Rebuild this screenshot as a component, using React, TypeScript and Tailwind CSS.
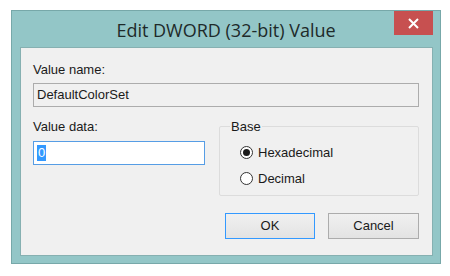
import React from "react";

const sans = { fontFamily: '"Liberation Sans", Arial, sans-serif' };

function Radio({ checked, label }: { checked?: boolean; label: string }) {
  return (
    <div className="flex items-center h-[26px]">
      <span className="w-[13px] h-[13px] rounded-full border border-[#333] bg-white flex items-center justify-center">
        {checked && <span className="w-[7px] h-[7px] rounded-full bg-[#1a1a1a]" />}
      </span>
      <span className="ml-[5px] text-[13px] leading-[15px] text-[#1a1a1a]">{label}</span>
    </div>
  );
}

export default function App() {
  return (
    <div className="w-[450px] h-[276px] bg-white pt-[10px] pl-[11px]" style={sans}>
      <div className="w-[430px] h-[254px] border border-[#77a8a9] bg-[#93c6c7] flex flex-col">
        {/* Title bar */}
        <div className="relative h-[36px] flex items-center justify-center shrink-0">
          <span
            className="text-[18px] leading-[24px] text-[#1e2a2a] mt-[1px]"
            style={{ fontFamily: '"Open Sans", "Noto Sans", sans-serif' }}
          >
            Edit DWORD (32-bit) Value
          </span>
          <div className="absolute top-0 right-[7px] w-[39px] h-[24px] bg-[#c75050] flex items-center justify-center">
            <svg width="11" height="11" viewBox="0 0 11 11">
              <path d="M1 1 L10 10 M10 1 L1 10" stroke="#fff" strokeWidth="2" />
            </svg>
          </div>
        </div>

        {/* Client area */}
        <div className="flex-1 mx-[8px] mb-[7px] mr-[7px] bg-[#f0f0f0] border border-[#86b0b1] pl-[12px] pr-[13px] pt-[14px] text-[#1a1a1a]">
          <div className="text-[13px] leading-[15px]">Value name:</div>
          <div className="mt-[6px] h-[24px] border border-[#acacac] bg-[#f0f0f0] flex items-center px-[3px] text-[13px]">
            DefaultColorSet
          </div>

          <div className="mt-[12px] flex gap-[14px]">
            <div className="w-[172px]">
              <div className="text-[13px] leading-[15px]">Value data:</div>
              <div className="mt-[7px] h-[24px] border border-[#569de5] bg-white flex items-center px-[3px] text-[13px]">
                <span className="bg-[#3399ff] text-white leading-[16px] px-[1px]">0</span>
              </div>
            </div>

            <fieldset className="flex-1 border border-[#dcdcdc] rounded-[2px] pl-[20px] pb-[4px]">
              <legend className="text-[13px] leading-[15px] ml-[-10px] px-[1px]">Base</legend>
              <div className="mt-[5px]">
                <Radio checked label="Hexadecimal" />
                <Radio label="Decimal" />
              </div>
            </fieldset>
          </div>

          <div className="mt-[17px] flex justify-end gap-[13px]">
            <button className="w-[90px] h-[26px] border border-[#3399ff] bg-gradient-to-b from-[#f0f0f0] to-[#e3e3e3] text-[13px] text-[#1a1a1a]">
              OK
            </button>
            <button className="w-[91px] h-[26px] border border-[#acacac] bg-gradient-to-b from-[#f0f0f0] to-[#e3e3e3] text-[13px] text-[#1a1a1a]">
              Cancel
            </button>
          </div>
        </div>
      </div>
    </div>
  );
}
